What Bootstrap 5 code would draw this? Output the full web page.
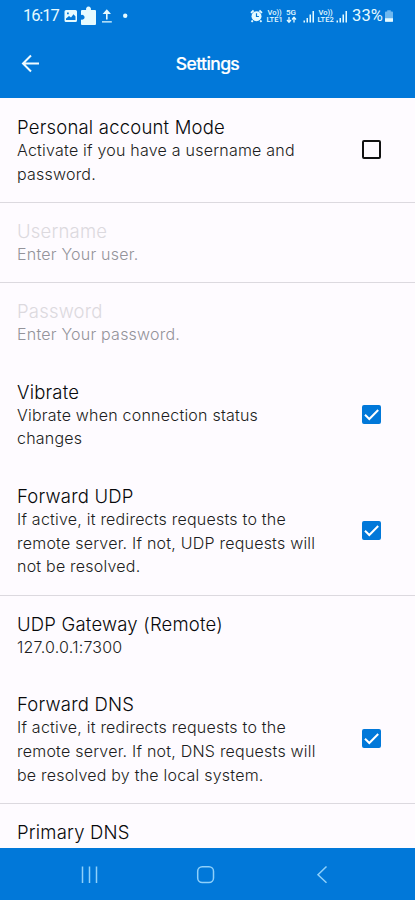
<!DOCTYPE html>
<html lang="en">
<head>
<meta charset="utf-8">
<meta name="viewport" content="width=device-width, initial-scale=1">
<title>Settings</title>
<link rel="stylesheet" href="https://cdn.jsdelivr.net/npm/bootstrap@5.3.0/dist/css/bootstrap.min.css">
<style>
  body { font-family: Inter, Lato, sans-serif; font-weight: 300; background: #fefbff; color: #08090b; }
  .screen { height: 900px; }
  .brand-bar { background: #0178d9; color: #fff; }
  .status { height: 32px; padding: 0 22px 0 23px; color: #e6fbff; }
  .clock, .battery-pct { font-family: Roboto, sans-serif; font-weight: 400; font-size: 16.5px; line-height: 32px; }
  .clock { width: 41px; letter-spacing: -1.1px; }
  .battery-pct { letter-spacing: .1px; }
  .title-bar { height: 66px; }
  .title-bar h1 { font-size: 17.5px; font-weight: 500; letter-spacing: -.6px; margin: 0; padding-bottom: 4px; -webkit-text-stroke: .2px #fff; }
  .back { left: 20px; top: 19px; }
  .tiny { font: 500 7.5px/7.5px Roboto, sans-serif; text-align: center; white-space: nowrap; }
  .setting { padding: 17px 17px 15.3px; }
  .setting-title { font-size: 18.5px; line-height: 24px; letter-spacing: .2px; }
  .setting-note { font-size: 16px; line-height: 23.9px; letter-spacing: .22px; color: #1c1d21; }
  .ruled { box-shadow: 0 1px #dcd9df; }
  .off .setting-title { color: #dcd9de; }
  .off .setting-note { color: #94939a; }
  .tick { width: 19px; height: 19px; margin: 0 17px 2px 0; border: 2px solid #111; border-radius: 2px !important; background-color: transparent; }
  .tick:checked { background-color: #0178d9; border-color: #0178d9; background-size: 19px; background-position: center; background-origin: border-box;
    background-image: url("data:image/svg+xml,%3Csvg xmlns='http://www.w3.org/2000/svg' viewBox='0 0 19 19'%3E%3Cpath d='M3 9.7 7.3 14 16.2 5' fill='none' stroke='%23fff' stroke-width='2'/%3E%3C/svg%3E"); }
  .system-nav { height: 52px; }
</style>
<script src="https://cdn.jsdelivr.net/npm/bootstrap@5.3.0/dist/js/bootstrap.bundle.min.js"></script>
</head>
<body>
<div class="screen d-flex flex-column overflow-hidden">
  <header class="brand-bar flex-shrink-0">
    <div class="status d-flex align-items-center">
      <span class="clock">16:17</span>
      <svg width="66" height="20" viewBox="64 6 66 20" fill="#e6fbff">
        <path fill-rule="evenodd" d="M66 10h9.500q1.500 0 1.500 1.500v9q0 1.500-1.500 1.500H66q-1.500 0-1.500-1.500v-9Q64.500 10 66 10zm0 8.500v1.500h9.500v-3.500l-2-2.300-2.500 3.300-2-1.500zM67 12.500v1.800h1.800v-1.800z"/>
        <path d="M82 10h4.200a2.500 2.500 0 1 1 4.600 0H95q1 0 1 1v13q0 1-1 1H82q-1 0-1-1v-4.500a2.500 2.500 0 1 0 0-4.500v-4q0-1 1-1z"/>
        <path d="M106.800 9.300 111 14h-3.400v5.500H106V14h-3.400zM102 21.200h9.800v1.400H102z"/>
        <circle cx="125.200" cy="15.800" r="2.200"/>
      </svg>
      <svg class="ms-auto" width="13" height="14" viewBox="0 0 13 14" style="margin-right:3px"><path d="M1 3.800 3.600 1.500M12 3.800 9.400 1.500M2.800 11.500l-1.300 1.300M10.200 11.500l1.300 1.300" stroke="#e6fbff" stroke-width="1.800"/><circle cx="6.500" cy="7.200" r="5" fill="#e6fbff"/><path d="M6.500 4.200v3.300h2.400" fill="none" stroke="#0178d9" stroke-width="1.200"/></svg>
      <div class="tiny" style="width:17px">Vo))<br>LTE1</div>
      <svg width="13" height="16" viewBox="0 0 13 16" style="margin-left:2px"><text x="1" y="7" font-family="Roboto" font-weight="500" font-size="8" fill="#e6fbff">5G</text><path d="M4 9v5M2 12l2 2.200 2-2.200M9 14.500v-5M7 11.500l2-2.200 2 2.200" fill="none" stroke="#e6fbff" stroke-width="1.300"/></svg>
      <svg width="12" height="13" viewBox="0 0 12 13" fill="#e6fbff" style="margin-left:5px;margin-right:2px"><path d="M.5 10.500h1.500v2H.5zM3.500 8H5v4.500H3.500zM6.500 4.500H8v8H6.500zM9.500 1H11v11.500H9.500z"/></svg>
      <div class="tiny" style="width:17px">Vo))<br>LTE2</div>
      <svg width="12" height="13" viewBox="0 0 12 13" fill="#e6fbff" style="margin-left:2px;margin-right:4px"><path d="M.5 10.500h1.500v2H.5zM3.500 8H5v4.500H3.500zM6.500 4.500H8v8H6.500zM9.500 1H11v11.500H9.500z"/></svg>
      <span class="battery-pct">33%</span>
      <svg width="8" height="12" viewBox="0 0 9 13" style="margin-left:2px"><path d="M2.500 0h4v1.500H8q1 0 1 1V12q0 1-1 1H1q-1 0-1-1V2.500q0-1 1-1h1.500z" fill="#6fb8ef"/><path d="M0 9h9v3q0 1-1 1H1q-1 0-1-1z" fill="#e6fbff"/></svg>
    </div>
    <div class="title-bar position-relative d-flex align-items-center justify-content-center">
      <svg class="back position-absolute" width="22" height="24" viewBox="0 0 22 24" fill="none" stroke="#f0fbff" stroke-width="2"><path d="M19 12.500H3.500M11 4.500l-8 8 8 8"/></svg>
      <h1>Settings</h1>
    </div>
  </header>

  <main class="flex-grow-1 overflow-hidden">
    <label class="setting ruled d-flex align-items-center justify-content-between">
      <span><span class="setting-title d-block">Personal account Mode</span><span class="setting-note d-block">Activate if you have a username and<br>password.</span></span>
      <input class="tick form-check-input flex-shrink-0" type="checkbox">
    </label>
    <div class="setting ruled off">
      <div class="setting-title">Username</div><div class="setting-note">Enter Your user.</div>
    </div>
    <div class="setting off">
      <div class="setting-title">Password</div><div class="setting-note">Enter Your password.</div>
    </div>
    <label class="setting d-flex align-items-center justify-content-between">
      <span><span class="setting-title d-block">Vibrate</span><span class="setting-note d-block">Vibrate when connection status<br>changes</span></span>
      <input class="tick form-check-input flex-shrink-0" type="checkbox" checked>
    </label>
    <label class="setting ruled d-flex align-items-center justify-content-between">
      <span><span class="setting-title d-block">Forward UDP</span><span class="setting-note d-block">If active, it redirects requests to the<br>remote server. If not, UDP requests will<br>not be resolved.</span></span>
      <input class="tick form-check-input flex-shrink-0" type="checkbox" checked>
    </label>
    <div class="setting">
      <div class="setting-title">UDP Gateway (Remote)</div><div class="setting-note">127.0.0.1:7300</div>
    </div>
    <label class="setting ruled d-flex align-items-center justify-content-between">
      <span><span class="setting-title d-block">Forward DNS</span><span class="setting-note d-block">If active, it redirects requests to the<br>remote server. If not, DNS requests will<br>be resolved by the local system.</span></span>
      <input class="tick form-check-input flex-shrink-0" type="checkbox" checked>
    </label>
    <div class="setting">
      <div class="setting-title">Primary DNS</div>
    </div>
  </main>

  <nav class="brand-bar system-nav flex-shrink-0">
    <svg class="d-block" width="415" height="52" viewBox="0 848 415 52" fill="none" stroke="#8fd0fa" stroke-width="1.500"><path d="M82.500 866.500v16.500M89.500 866.500v16.500M96.500 866.500v16.500"/><rect x="197.700" y="866.700" width="15.800" height="15.800" rx="4.500"/><path d="M326.500 866.500 318 874.800l8.500 8"/></svg>
  </nav>
</div>
</body>
</html>
